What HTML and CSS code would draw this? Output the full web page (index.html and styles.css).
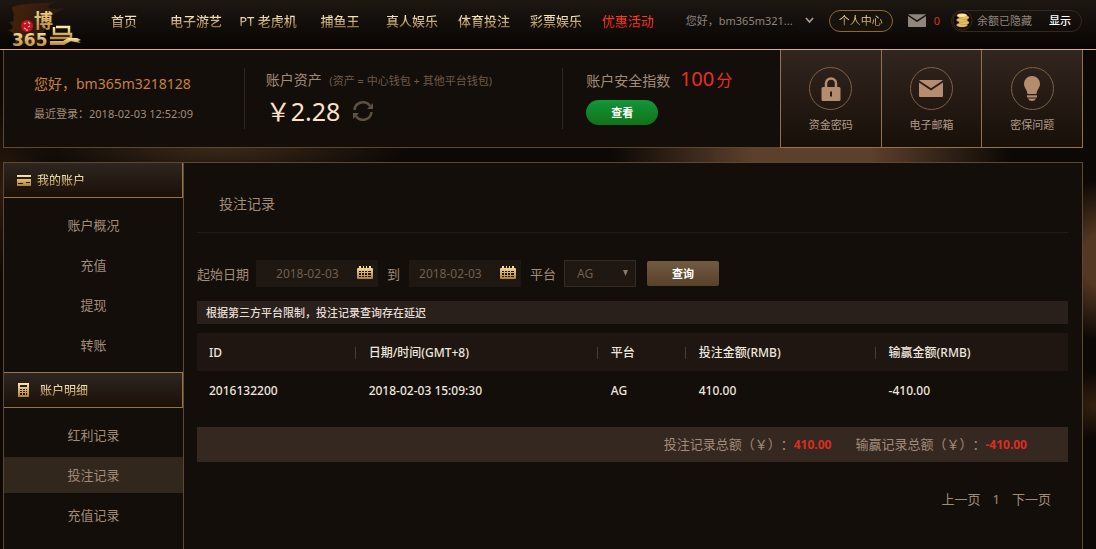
FILE: index.html
```html
<!DOCTYPE html>
<html lang="zh-CN">
<head>
<meta charset="utf-8">
<title>投注记录</title>
<link rel="stylesheet" href="styles.css">
</head>
<body>
<svg class="defs" width="0" height="0" aria-hidden="true">
  <defs>
    <linearGradient id="gold" x1="0" y1="0" x2="0" y2="1">
      <stop offset="0" stop-color="#fbe9a6"/><stop offset="1" stop-color="#b07f2f"/>
    </linearGradient>
    <linearGradient id="flame" x1="0" y1="0" x2="1" y2="0">
      <stop offset="0" stop-color="#4a240a" stop-opacity=".9"/><stop offset="1" stop-color="#4a260c" stop-opacity=".3"/>
    </linearGradient>
    <symbol id="calendar" viewBox="0 0 16 14">
      <path fill="url(#gold)" fill-rule="evenodd" d="M1 2h1V0h2v2h2V0h1v2h2V0h1v2h2V0h2v2h1q1 0 1 1v9q0 1-1 1H1q-1 0-1-1V3q0-1 1-1zM2 5v1h2V5zm3 0v1h2V5zm3 0v1h2V5zm3 0v1h3V5zM2 7v2h2V7zm3 0v2h2V7zm3 0v2h2V7zm3 0v2h3V7zM2 10v1h2v-1zm3 0v1h2v-1zm3 0v1h2v-1zm3 0v1h3v-1z"/>
    </symbol>
    <symbol id="envelope" viewBox="0 0 24 17">
      <path fill="currentColor" d="M1 0h22q.8 0 .8.600L12 8.200.200.600Q.200 0 1 0zM0 2.600l12 7.800 12-7.800V16q0 1-1 1H1q-1 0-1-1z"/>
    </symbol>
  </defs>
</svg>

<header class="topbar">
  <a class="logo" href="#" aria-label="博365马">
    <svg width="88" height="49" viewBox="0 0 88 49">
      <path fill="url(#flame)" d="M12 7c14-5 30-3 44-5-8 3-10 6-4 7 6 0 10-1 14-1-8 4-14 6-18 10L40 44H14c6-6 2-10-6-14 6 0 6-4 1-8 5 0 6-2 4-5 3-2-1-5-1-10z"/>
      <circle cx="27" cy="26" r="6" fill="#c41226"/>
      <path d="M24 24l2-1M28 22l2 2M24 28l2 1M28 27l2-1M27 29v2" stroke="#ffb9b0" stroke-width="1.2"/>
      <text x="34" y="28" class="logo-bo">博</text>
      <path fill="none" stroke="url(#gold)" stroke-width="2.500" d="M56 27h13v6M54 27v7h17v6h6M50 38h20"/>
      <path fill="url(#gold)" d="M50 41h13l5-3h9l4 2-3 1 3 2-6-1-4-1-7 4H50z"/>
      <text x="12" y="46" class="logo-num">365</text>
    </svg>
  </a>
  <nav class="nav">
    <a href="#">首页</a>
    <a href="#">电子游艺</a>
    <a href="#">PT 老虎机</a>
    <a href="#">捕鱼王</a>
    <a href="#">真人娱乐</a>
    <a href="#">体育投注</a>
    <a href="#">彩票娱乐</a>
    <a href="#" class="hot">优惠活动</a>
  </nav>
  <div class="account">
    <button class="who" type="button"><span>您好，bm365m321...</span>
      <svg width="9" height="7" viewBox="0 0 9 7"><path d="M1 1l3.500 4L8 1" fill="none" stroke="#a59b92" stroke-width="1.800"/></svg>
    </button>
    <a class="center-link" href="#"><span>个人中心</span></a>
    <a class="mail" href="#" aria-label="站内信"><svg width="18" height="13"><use href="#envelope"/></svg><span>0</span></a>
    <div class="balance">
      <svg width="21" height="21" viewBox="0 0 21 21">
        <circle cx="10.500" cy="10.500" r="9.500" fill="#0e0a06" stroke="#3c2c14"/>
        <g fill="#e8c468" stroke="#a87d2c" stroke-width=".5">
          <ellipse cx="10" cy="15" rx="5.500" ry="2"/><ellipse cx="12" cy="12.500" rx="5" ry="2"/>
          <ellipse cx="10" cy="10" rx="5.500" ry="2"/><ellipse cx="12" cy="7.500" rx="5" ry="2"/>
          <ellipse cx="10" cy="5.500" rx="5" ry="2" fill="#ffeaa0"/>
        </g>
      </svg>
      <span>余额已隐藏</span>
      <button type="button">显示</button>
    </div>
  </div>
</header>

<div class="page">
  <section class="summary">
    <div class="user">
      <p class="hello">您好，bm365m3218128</p>
      <p class="last">最近登录：2018-02-03 12:52:09</p>
    </div>
    <div class="assets">
      <p class="label">账户资产 <small>(资产 = 中心钱包 + 其他平台钱包)</small></p>
      <p class="amount">￥2.28
        <button type="button" aria-label="刷新">
          <svg width="22" height="20" viewBox="0 0 22 20"><g fill="none" stroke="#5e5144" stroke-width="2.500"><path d="M2.500 9A8.500 8.500 0 0 1 18 5"/><path d="M19.500 11A8.500 8.500 0 0 1 4 15"/></g><path fill="#5e5144" d="M21 2v6h-6zM1 18v-6h6z"/></svg>
        </button>
      </p>
    </div>
    <div class="safety">
      <p class="label">账户安全指数 <span class="score">100<small>分</small></span></p>
      <button class="view" type="button">查看</button>
    </div>
    <div class="tiles">
      <a href="#">
        <span class="ring"><svg width="20" height="24" viewBox="0 0 20 24"><path d="M5 11V6.500a5 5 0 0 1 10 0V11" fill="none" stroke="#b58c6e" stroke-width="2.500"/><path fill="#b58c6e" fill-rule="evenodd" d="M2 10h16q1.500 0 1.500 1.500v11Q19.500 24 18 24H2Q.5 24 .5 22.500v-11Q.5 10 2 10zm7 4.500v5h2v-5z"/></svg></span>
        资金密码
      </a>
      <a href="#">
        <span class="ring"><svg width="24" height="17"><use href="#envelope"/></svg></span>
        电子邮箱
      </a>
      <a href="#">
        <span class="ring"><svg width="18" height="26" viewBox="0 0 18 26"><path fill="#b58c6e" d="M9 0a8 8 0 0 1 8 8c0 4-3 5-3.500 10h-9C4 13 1 12 1 8a8 8 0 0 1 8-8zM4 19.200h10v2.300H4zM5 22.500h8Q12 25 9 25T5 22.500z"/></svg></span>
        密保问题
      </a>
    </div>
  </section>

  <div class="body">
    <aside class="side">
      <h2><svg width="14" height="11" viewBox="0 0 14 11"><path fill="url(#gold)" fill-rule="evenodd" d="M0 0h14v2H0zM0 4h14v7H0zM1 8v1h5V8zm8-1v1h4V7z"/></svg><span>我的账户</span></h2>
      <ul>
        <li><a href="#">账户概况</a></li>
        <li><a href="#">充值</a></li>
        <li><a href="#">提现</a></li>
        <li><a href="#">转账</a></li>
      </ul>
      <h2 class="detail"><svg width="11" height="14" viewBox="0 0 11 14"><path fill="url(#gold)" fill-rule="evenodd" d="M0 0h11v14H0zM2 2v2h7V2zm0 4v1h2V6zm3 0v1h2V6zm3 0v1h1V6zM2 8v1h2V8zm3 0v1h2V8zm3 0v1h1V8zm-6 2v2h2v-2zm3 0v2h2v-2zm3 0v2h1v-2z"/></svg><span>账户明细</span></h2>
      <ul>
        <li><a href="#">红利记录</a></li>
        <li><a href="#" class="on">投注记录</a></li>
        <li><a href="#">充值记录</a></li>
      </ul>
    </aside>

    <main class="main">
      <h1>投注记录</h1>
      <form class="filter">
        <label for="from">起始日期</label>
        <span class="date wide"><input id="from" type="text" value="2018-02-03"><svg width="16" height="14"><use href="#calendar"/></svg></span>
        <label for="to">到</label>
        <span class="date"><input id="to" type="text" value="2018-02-03"><svg width="16" height="14"><use href="#calendar"/></svg></span>
        <label for="platform">平台</label>
        <span class="pick"><select id="platform"><option>AG</option></select><svg width="5" height="6" viewBox="0 0 5 6"><path fill="#8b7866" d="M0 0h5L2.500 6z"/></svg></span>
        <button type="button">查询</button>
      </form>
      <p class="notice">根据第三方平台限制，投注记录查询存在延迟</p>
      <table class="records">
        <colgroup><col class="c-id"><col class="c-time"><col class="c-plat"><col class="c-bet"><col class="c-win"></colgroup>
        <thead>
          <tr><th>ID</th><th>日期/时间(GMT+8)</th><th>平台</th><th>投注金额(RMB)</th><th>输赢金额(RMB)</th></tr>
        </thead>
        <tbody>
          <tr><td>2016132200</td><td>2018-02-03 15:09:30</td><td>AG</td><td>410.00</td><td>-410.00</td></tr>
        </tbody>
      </table>
      <div class="totals">
        <span>投注记录总额（￥）：<b>410.00</b></span>
        <span>输赢记录总额（￥）：<b>-410.00</b></span>
      </div>
      <nav class="pager"><a href="#">上一页</a><a href="#">1</a><a href="#">下一页</a></nav>
    </main>
  </div>
</div>
</body>
</html>
```

FILE: styles.css
```css
* { box-sizing: border-box; }
body, p, h1, h2, ul { margin: 0; padding: 0; }
ul { list-style: none; }
a { color: inherit; text-decoration: none; }
button, input, select { font: inherit; color: inherit; background: none; border: 0; padding: 0; margin: 0; }
button { cursor: pointer; }
svg { display: block; flex: none; }
.defs { position: absolute; }

body {
  display: flex;
  flex-direction: column;
  min-height: 100vh;
  font: 13px/20px "Noto Sans", "Noto Sans CJK SC", sans-serif;
  text-spacing-trim: space-all;
  color: #a18b79;
  background-color: #0c0805;
  background-image:
    radial-gradient(ellipse 190px 40px at 20% 146px, #3d2a19, transparent),
    radial-gradient(ellipse 200px 80px at 74% 154px, #5c4029 30%, transparent),
    radial-gradient(ellipse 60px 90px at 0 190px, #2c1b0e, transparent),
    radial-gradient(ellipse 44px 80px at 100% 260px, #543821 30%, transparent),
    radial-gradient(ellipse 40px 34px at 100% 405px, #35210f, transparent);
  overflow: hidden;
}

/* top bar */
.topbar {
  display: flex;
  align-items: center;
  height: 50px;
  padding-right: 14px;
  border-bottom: 1px solid #dcae80;
  background: linear-gradient(#1e1712, #060403);
}
.logo { width: 88px; }
.logo-bo { font: bold 19px "Noto Sans CJK SC", sans-serif; fill: url(#gold); }
.logo-num { font: bold 17px "DejaVu Sans", sans-serif; fill: url(#gold); }
.nav { display: flex; margin-bottom: 7px; }
.nav a, .center-link span, .side h2 span {
  color: transparent;
  background: linear-gradient(#f5e6b4 25%, #94713a 85%);
  background-clip: text;
  -webkit-background-clip: text;
}
.nav a { width: 72px; text-align: center; white-space: nowrap; line-height: 18px; font-weight: 500; }
.nav .hot { background-image: linear-gradient(#ff3a20 25%, #c9200f 85%); }
.account { display: flex; align-items: center; margin-left: auto; margin-bottom: 8px; font-size: 11px; white-space: nowrap; }
.who { display: flex; align-items: center; gap: 12px; color: #8f857d; }
.center-link {
  width: 64px; height: 22px; margin-left: 15px;
  border: 1px solid #8a6b2c; border-radius: 11px;
  background: #17120b;
  text-align: center; line-height: 19px;
}
.center-link span { background-image: linear-gradient(#ffe99a 25%, #b58d35 85%); }
.mail { display: flex; align-items: center; gap: 8px; margin-left: 15px; color: #8f857d; }
.mail span { color: #cf3a26; }
.balance {
  display: flex; align-items: center;
  width: 131px; height: 22px; margin-left: 11px; padding-right: 10px;
  border: 1px solid #33291f; border-radius: 11px;
  color: #8f857d;
}
.balance span { margin-left: 4px; }
.balance button { margin-left: auto; color: #fff; font-weight: 500; }

/* frame */
.page { flex: 1; display: flex; flex-direction: column; gap: 14px; padding: 0 13px 0 3px; }

/* account summary */
.summary {
  display: grid;
  grid-template-columns: 240fr 319fr 218fr 303px;
  height: 98px;
  border-left: 1px solid #5e482f;
  border-bottom: 1px solid #5e482f;
  background: #130e0a;
}
.user { padding: 24px 0 0 30px; }
.hello { font-size: 14px; color: #c8803f; }
.last { margin-top: 10px; font-size: 11px; }
.assets, .safety {
  padding: 20px 0 0 22px;
  background: linear-gradient(#30271f, #30271f) 0 18px / 1px 61px no-repeat;
}
.label { font-size: 14px; white-space: nowrap; }
.label small { margin-left: 4px; font-size: 11px; color: #6e5a49; }
.amount { display: flex; align-items: center; gap: 12px; font-size: 25px; line-height: 40px; color: #fde2c6; }
.safety { padding: 14px 0 0 24px; }
.safety .label { line-height: 30px; }
.score { margin-left: 6px; font-size: 20px; color: #e82f22; }
.score small { margin-left: 2px; font-size: 16px; color: inherit; }
.view {
  display: block;
  width: 72px; height: 25px; margin-top: 4px;
  border-radius: 13px;
  background: linear-gradient(#12963a, #137217);
  color: #fff; font-size: 11px; font-weight: bold;
}
.tiles { display: grid; grid-template-columns: repeat(3, 1fr); border-right: 1px solid #96714e; }
.tiles a {
  display: flex; flex-direction: column; align-items: center; gap: 5px;
  height: 98px; padding-top: 17px;
  border-left: 1px solid #96714e;
  border-bottom: 1px solid #96714e;
  background: linear-gradient(#32261f, #170f08);
  font-size: 11px; color: #b09a8a;
}
.ring {
  display: flex; align-items: center; justify-content: center;
  width: 43px; height: 43px;
  border: 1px solid #7f6145; border-radius: 50%;
  color: #b58c6e;
}

/* body */
.body { flex: 1; display: flex; border: 1px solid #5e482f; border-bottom: 0; background: #130e0a; }
.side { width: 180px; flex: none; border-right: 1px solid #5e482f; }
.side h2 {
  display: flex; align-items: center; gap: 6px;
  height: 36px; padding-left: 13px;
  border: 1px solid #987448; border-left: 0;
  background: linear-gradient(#2f2520, #1a1008);
  font-size: 12px; font-weight: 500; line-height: 18px;
}
.side h2:first-child { border-top: 0; height: 35px; }
.side h2 span { padding-top: 2px; }
.side .detail { gap: 11px; padding-left: 14px; }
.side ul { display: grid; gap: 4px; padding: 9px 0; }
.side li a { display: block; line-height: 36px; text-align: center; }
.side .on { background: #32271d; }

.main { flex: 1; min-width: 0; padding: 0 14px 0 13px; }
h1 {
  height: 70px; padding-left: 22px;
  border-bottom: 1px solid #231b15;
  font-size: 14px; font-weight: normal; line-height: 81px;
}
.filter { display: flex; align-items: center; margin-top: 27px; white-space: nowrap; }
.date { display: flex; align-items: center; width: 112px; height: 27px; margin: 0 9px; padding: 0 5px 0 10px; background: #1f1711; color: #70604f; }
.date.wide { width: 122px; margin: 0 9px 0 7px; padding-left: 20px; }
.date svg { margin-bottom: 2px; }
.date input { flex: 1; width: 0; outline: 0; font-size: 12px; }
.pick { position: relative; width: 72px; height: 27px; margin: 0 11px 0 8px; border: 1px solid #372b21; background: #1f1711; color: #70604f; }
.pick select { width: 100%; height: 100%; padding-left: 12px; appearance: none; font-size: 12px; }
.pick svg { position: absolute; right: 7px; top: 9px; pointer-events: none; }
.filter button {
  width: 72px; height: 25px;
  border-radius: 2px;
  background: linear-gradient(#735b41, #574129);
  color: #fff; font-size: 11px; font-weight: bold;
}
.notice { height: 23px; margin-top: 14px; padding-left: 9px; background: #29201b; color: #e6ddd6; font-size: 11px; font-weight: 500; line-height: 23px; }
.records { width: 100%; margin-top: 9px; border-collapse: collapse; table-layout: fixed; font-size: 12px; color: #eee6df; }
.c-id { width: 18.1%; }
.c-time { width: 27.8%; }
.c-plat { width: 10.1%; }
.c-bet { width: 21.8%; }
.c-win { width: 22.2%; }
.records th, .records td { height: 38px; padding: 2px 0 0 14px; text-align: left; font-weight: 500; white-space: nowrap; }
.records th:first-child, .records td:first-child { padding-left: 12px; }
.records thead { background: #1f1612; }
.records th + th { background: linear-gradient(#4a3b2d, #4a3b2d) 0 14px / 1px 12px no-repeat; }
.totals { display: flex; justify-content: flex-end; gap: 24px; height: 35px; margin-top: 18px; padding-right: 41px; background: #352821; line-height: 34px; }
.totals b { color: #dc2d1f; font-size: 12px; }
.pager { display: flex; justify-content: flex-end; gap: 12px; margin-top: 27px; padding-right: 17px; }
```
